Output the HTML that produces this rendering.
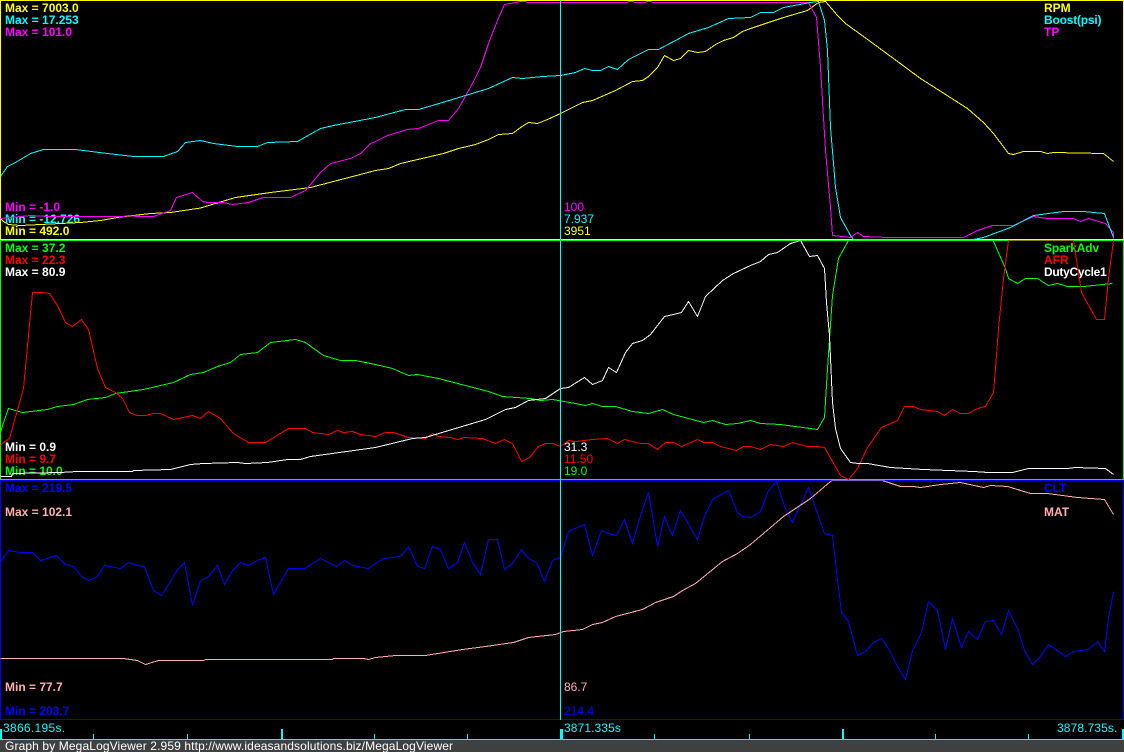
<!DOCTYPE html>
<html><head><meta charset="utf-8"><style>
html,body{margin:0;padding:0;background:#000;overflow:hidden}
svg{display:block}
text{font-family:"Liberation Sans",Arial,sans-serif;font-size:12px}
polyline{fill:none;stroke-width:1;shape-rendering:crispEdges}
rect{shape-rendering:crispEdges}
</style></head><body>
<svg width="1124" height="752" viewBox="0 0 1124 752" xmlns="http://www.w3.org/2000/svg">
<defs>
<clipPath id="c1"><rect x="0" y="0" width="1124" height="240"/></clipPath>
<clipPath id="c2"><rect x="0" y="240" width="1124" height="240"/></clipPath>
<clipPath id="c3"><rect x="0" y="480" width="1124" height="240"/></clipPath>
</defs>
<rect width="1124" height="752" fill="#000"/>

<!-- borders -->
<rect x="0" y="0" width="1124" height="1" fill="#ff0"/>
<rect x="0" y="0" width="1" height="240" fill="#ff0"/>
<rect x="1123" y="0" width="1" height="240" fill="#ff0"/>
<rect x="0" y="239" width="1124" height="1" fill="#ff0"/>
<rect x="0" y="240" width="1124" height="1" fill="#0f0"/>
<rect x="0" y="240" width="1" height="240" fill="#0f0"/>
<rect x="1123" y="240" width="1" height="240" fill="#0f0"/>
<rect x="0" y="479" width="1124" height="1" fill="#0f0"/>
<rect x="0" y="480" width="1124" height="1" fill="#00f"/>
<rect x="0" y="480" width="1" height="240" fill="#00f"/>
<rect x="1123" y="480" width="1" height="240" fill="#00f"/>
<rect x="0" y="719" width="1124" height="1" fill="#00f"/>

<!-- panel text -->
<g font-weight="bold">
<text x="5" y="12" fill="#ff0">Max = 7003.0</text>
<text x="5" y="24" fill="#0ff">Max = 17.253</text>
<text x="5" y="36" fill="#f0f">Max = 101.0</text>
<text x="5" y="211" fill="#f0f">Min = -1.0</text>
<text x="5" y="223" fill="#0ff">Min = -12.726</text>
<text x="5" y="235" fill="#ff0">Min = 492.0</text>
<text x="1044" y="12" fill="#ff0">RPM</text>
<text x="1044" y="24" fill="#0ff" letter-spacing="-0.2">Boost(psi)</text>
<text x="1044" y="36" fill="#f0f">TP</text>

<text x="5" y="252" fill="#0f0">Max = 37.2</text>
<text x="5" y="264" fill="#f00">Max = 22.3</text>
<text x="5" y="276" fill="#fff">Max = 80.9</text>
<text x="5" y="451" fill="#fff">Min = 0.9</text>
<text x="5" y="463" fill="#f00">Min = 9.7</text>
<text x="5" y="475" fill="#0f0">Min = 10.0</text>
<text x="1044" y="252" fill="#0f0" letter-spacing="-0.12">SparkAdv</text>
<text x="1044" y="264" fill="#f00">AFR</text>
<text x="1044" y="276" fill="#fff" letter-spacing="-0.3">DutyCycle1</text>

<text x="5" y="492" fill="#00f">Max = 219.5</text>
<text x="5" y="516" fill="#ffafaf">Max = 102.1</text>
<text x="5" y="691" fill="#ffafaf">Min = 77.7</text>
<text x="5" y="715" fill="#00f">Min = 203.7</text>
<text x="1044" y="492" fill="#00f">CLT</text>
<text x="1044" y="516" fill="#ffafaf">MAT</text>
</g>

<text x="564" y="211" fill="#f0f">100</text>
<text x="564" y="223" fill="#0ff">7.937</text>
<text x="564" y="235" fill="#ff0">3951</text>
<text x="564" y="451" fill="#fff">31.3</text>
<text x="564" y="463" fill="#f00">11.50</text>
<text x="564" y="475" fill="#0f0">19.0</text>
<text x="564" y="691" fill="#ffafaf">86.7</text>
<text x="564" y="715" fill="#00f">214.4</text>

<g transform="translate(0.5 0.5)">
<!-- panel 1 curves -->
<g clip-path="url(#c1)">
<polyline stroke="#ff0" points="0,218 3,221 8,224 20,225 80,222 100,220 120,216.5 150,213 170,212 200,207.5 235,197 270,192 310,187 375,170 388,168 400,163 443,153 458,148 475,144 488,139 498,134 512,133 520,127 528,122 537,123 547,119 560,113 582,102 592,100 615,90 632,81 642,80 648,76 657,67 664,55 673,60 680,58 688,50 697,52 705,51 715,44 723,40 733,37 742,31 750,28 783,17 807,10 818,2 825,1 837,15 845,23 863,36 893,58 920,78 967,108 983,122 993,133 1008,153 1013,154 1023,151 1040,151 1047,153 1053,152 1103,153 1113,161"/>
<polyline stroke="#f0f" points="0,218 30,215 50,216 123,216 128,215 137,216 153,216 170,210 176,197 192,192 202,201 207,202 223,202 232,204 248,202 263,197 290,197 305,190 320,172 330,163 350,158 360,153 370,143 375,141 387,135 407,129 418,128 438,120 448,120 458,108 472,83 480,67 488,43 497,20 504,4 515,2 520,1 525,1 527,2 627,2 628,1 632,1 634,2 645,2 646,1 650,1 652,2 808,2 816,17 820,67 825,150 830,207 832,235 842,236 850,237 857,232 863,236 887,237 963,237 977,230 992,225 1013,225 1033,216 1047,218 1073,218 1080,221 1088,218 1105,223 1113,232 1113,238"/>
<polyline stroke="#0ff" points="0,176 7,166 15,162 30,153 43,149 75,149 107,153 133,156 163,156 177,151 185,142 200,140 213,143 237,146 257,146 267,142 297,141 320,128 333,125 375,117 405,109 418,109 442,102 465,95 488,88 512,77 522,78 542,76 560,75 575,72 584,68 592,70 600,70 608,66 617,69 628,59 648,49 658,49 675,40 688,33 708,27 728,18 750,17 760,12 773,12 783,7 810,2 818,1 824,20 827,50 830,127 835,187 840,217 850,235 853,239 973,239 983,237 1010,227 1033,215 1063,211 1083,211 1104,213 1113,237"/>
</g>

<!-- panel 2 curves -->
<g clip-path="url(#c2)">
<polyline stroke="#0f0" points="0,432 2,425 8,408 22,412 47,409 57,406 73,404 87,399 105,397 115,393 143,389 173,382 190,374 203,372 217,366 230,362 240,354 257,352 270,342 295,339 305,342 323,355 340,360 355,360 375,364 392,368 408,375 417,374 438,378 465,385 488,391 502,396 530,398 540,400 552,399 575,403 585,405 592,403 602,406 615,406 632,411 648,413 662,409 673,414 703,422 712,420 725,424 737,423 750,420 760,423 780,424 817,429 824,417 827,368 832,295 838,258 848,240 851,235 990,235 993,241 1005,268 1008,278 1017,283 1025,278 1037,278 1048,285 1057,283 1067,286 1083,286 1112,283"/>
<polyline stroke="#f00" points="0,445 3,442 9,438 23,388 32,292 42,292 49,293 57,305 65,322 72,326 81,319 88,329 97,368 105,387 115,392 122,398 129,412 137,415 145,415 153,413 160,413 173,419 192,415 200,418 208,411 220,418 233,433 248,442 265,442 288,428 305,428 312,432 328,434 337,430 343,432 352,431 360,434 375,436 385,432 393,432 408,437 425,438 432,433 438,436 450,437 457,439 463,437 482,438 495,443 504,439 512,443 521,461 529,457 538,446 545,443 553,443 560,446 568,440 575,441 592,439 607,438 617,443 624,439 640,443 648,443 657,449 665,442 673,442 681,446 697,439 703,442 712,442 720,446 736,450 743,446 750,446 760,449 770,444 783,446 792,442 807,446 817,446 824,447 840,475 848,479 857,468 867,447 881,427 897,420 904,406 913,406 920,409 937,411 944,415 952,409 960,413 968,413 977,408 985,406 993,392 995,368 998,328 1003,278 1008,240 1073,240 1081,292 1096,319 1104,319 1108,278 1113,240"/>
<polyline stroke="#fff" points="0,476 11,476 12,473 60,472 77,471 132,471 133,470 170,469 190,464 203,463 237,462 245,463 267,462 287,459 300,459 310,456 375,447 412,438 425,437 455,428 485,419 505,409 515,407 528,400 545,398 560,388 568,387 584,377 592,384 602,380 608,367 616,372 625,352 632,343 642,340 650,334 664,316 673,314 681,312 688,301 697,316 705,296 722,280 733,273 750,265 760,261 768,254 777,252 790,243 800,240 809,256 817,255 824,268 826,302 829,335 832,402 835,428 840,448 850,462 858,463 867,463 890,467 923,469 973,471 988,472 1012,472 1028,468 1067,468 1075,467 1105,468 1113,474"/>
</g>

<!-- panel 3 curves -->
<g clip-path="url(#c3)">
<polyline stroke="#00f" points="0,561 8,550 20,552 32,552 40,560 56,555 65,564 73,566 81,576 88,580 97,576 104,565 120,568 128,562 137,565 144,566 153,590 161,595 168,584 177,569 184,562 192,605 200,580 208,576 217,565 224,584 232,570 240,562 248,565 257,560 265,557 273,594 288,568 304,568 320,558 336,566 344,560 352,565 368,568 375,563 383,558 393,557 401,555 408,546 417,566 424,568 432,546 440,549 448,568 457,562 464,542 472,562 480,574 488,539 497,539 504,569 512,563 521,549 528,558 536,562 544,581 552,560 560,557 568,531 577,527 584,524 592,555 601,530 608,533 616,535 624,519 632,543 640,515 648,492 657,546 664,516 672,535 680,510 697,539 704,516 712,499 728,490 737,512 742,516 750,517 760,511 768,490 776,481 784,506 792,522 808,487 824,533 832,535 836,571 841,612 848,621 857,655 865,651 873,642 881,638 888,648 897,666 905,679 912,650 921,632 928,601 937,610 945,649 952,618 961,647 968,631 977,639 985,621 993,620 1001,634 1008,610 1017,628 1024,650 1032,664 1040,656 1048,644 1057,650 1065,656 1073,651 1088,649 1097,641 1104,651 1108,618 1113,591"/>
<polyline stroke="#ffafaf" points="0,658 123,658 137,660 145,664 158,660 203,660 205,659 332,659 333,658 363,658 368,659 375,657 395,655 425,655 462,649 485,646 513,642 528,637 555,634 563,631 582,629 592,624 602,622 615,616 642,609 655,602 673,596 682,590 695,583 722,561 737,553 750,544 783,516 810,498 830,481 832,480 882,480 900,486 913,486 920,487 940,484 960,482 983,487 990,485 1007,486 1030,493 1047,493 1077,497 1104,499 1113,514"/>
</g>
</g>

<!-- cursor -->
<rect x="560" y="0" width="1" height="720" fill="#0ff"/>

<!-- time strip -->
<text x="3" y="732" fill="#0ff" letter-spacing="0.3">3866.195s.</text>
<text x="564" y="732" fill="#0ff" letter-spacing="0.1">3871.335s</text>
<text x="1057" y="732" fill="#0ff" letter-spacing="0.1">3878.735s.</text>
<rect x="0" y="739" width="1124" height="1" fill="#0ff"/>
<g fill="#0ff">
<rect x="0" y="729" width="2" height="10"/>
<rect x="93" y="734" width="1" height="5"/>
<rect x="187" y="734" width="1" height="5"/>
<rect x="281" y="729" width="2" height="10"/>
<rect x="374" y="734" width="1" height="5"/>
<rect x="467" y="734" width="1" height="5"/>
<rect x="560" y="729" width="3" height="10"/>
<rect x="654" y="734" width="1" height="5"/>
<rect x="749" y="734" width="1" height="5"/>
<rect x="842" y="729" width="2" height="10"/>
<rect x="935" y="734" width="1" height="5"/>
<rect x="1028" y="734" width="1" height="5"/>
<rect x="1122" y="729" width="2" height="10"/>
</g>

<!-- footer -->
<rect x="0" y="740" width="1124" height="12" fill="#404040"/>
<text x="5" y="750" fill="#fff" letter-spacing="0.12">Graph by MegaLogViewer 2.959 http://www.ideasandsolutions.biz/MegaLogViewer</text>
</svg>
</body></html>
